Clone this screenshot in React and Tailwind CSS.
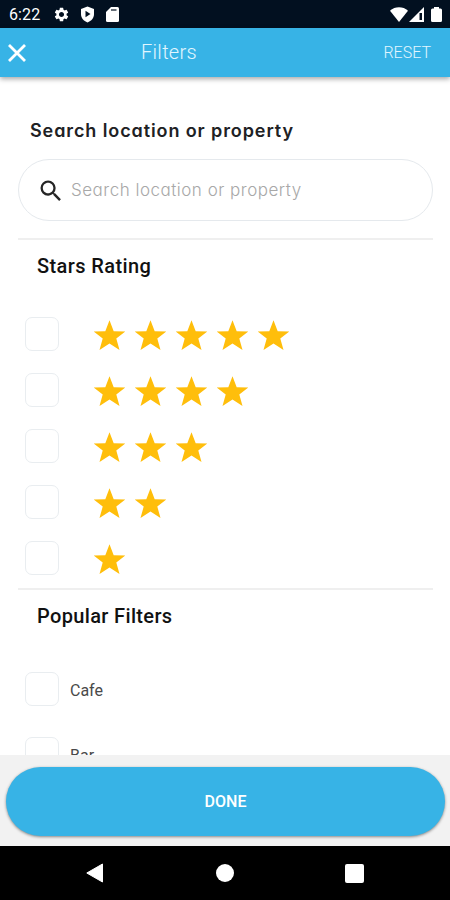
import React, { useState } from 'react';
import { MdSearch, MdSettings } from 'react-icons/md';

const STAR_RATINGS = [5, 4, 3, 2, 1];

const POPULAR_FILTERS = ['Cafe', 'Bar'];

const Star = () => (
  <svg width="33" height="31" viewBox="0 0 33 31" fill="#ffbe0b">
    <path d="M16.5 .3 20.7 11.3 32.300 11.600 23.300 18.600 26.500 30 16.500 23.500 6.500 30 9.700 18.600 .7 11.600 12.300 11.300Z" />
  </svg>
);

const Checkbox = ({ checked, onChange, label }) => (
  <button
    role="checkbox"
    aria-checked={checked}
    aria-label={label}
    onClick={onChange}
    className={`size-[34px] rounded-[7px] border shrink-0 ${checked ? 'bg-[#37b3e6] border-[#37b3e6]' : 'bg-white border-[#e9edf0]'}`}
  />
);

const StatusBar = () => (
  <div className="h-7 shrink-0 bg-[#021020] text-white flex items-center pl-[9px] pr-2 pt-[1px]">
    <span className="w-[33px] text-[16px] leading-none tracking-[0.1px]">6:22</span>
    <MdSettings className="ml-[11px] size-[17px]" />
    <svg className="ml-[10px]" width="15" height="17" viewBox="0 0 15 17">
      <path fill="#fff" d="M7.5.5 14 3v5c0 4-2.6 7-6.5 8.5C3.600 15 1 12 1 8V3Z" />
      <path fill="#021020" d="M5.500 4.800 10.500 8 5.500 11.200Z" />
    </svg>
    <svg className="ml-[11px]" width="13" height="15" viewBox="0 0 13 15">
      <path fill="#fff" d="M5 0h6.500A1.500 1.500 0 0 1 13 1.500v12A1.500 1.500 0 0 1 11.500 15h-10A1.500 1.500 0 0 1 0 13.500V5Z" />
      <path fill="#021020" fillOpacity="0.75" d="M5 2.200h5.500v1.600H5Z" />
    </svg>
    <div className="flex-1" />
    <svg width="18" height="15" viewBox="0 0 18 15">
      <path fill="#fff" d="M9 15 0 3.700C5-.9 13-.9 18 3.700Z" />
    </svg>
    <svg className="ml-[1px]" width="15" height="15" viewBox="0 0 15 15">
      <path fill="#fff" d="M15 0v15H0Z" />
      <path fill="#021020" d="M10.500 6H13v7h-2.500Z" />
    </svg>
    <svg className="ml-[7px]" width="11" height="15" viewBox="0 0 11 15">
      <path fill="#fff" d="M3 0h5v1.500h1.500A1.500 1.500 0 0 1 11 3v10.500A1.500 1.500 0 0 1 9.500 15h-8A1.500 1.500 0 0 1 0 13.500V3a1.500 1.500 0 0 1 1.500-1.500H3Z" />
    </svg>
  </div>
);

const NavigationBar = () => (
  <div className="h-[54px] shrink-0 bg-black flex items-center justify-between pl-[86px] pr-[86px]">
    <svg width="17" height="20" viewBox="0 0 17 20">
      <path fill="#fff" stroke="#fff" strokeLinejoin="round" d="M16.500 1v18L.8 10Z" />
    </svg>
    <div className="ml-[2px] size-[18px] rounded-full bg-white" />
    <div className="size-[19px] rounded-[2px] bg-white" />
  </div>
);

const App = () => {
  const [query, setQuery] = useState('');
  const [selected, setSelected] = useState([]);

  const toggle = (key) => {
    setSelected((prev) => (prev.includes(key) ? prev.filter((k) => k !== key) : [...prev, key]));
  };

  const handleReset = () => {
    setQuery('');
    setSelected([]);
  };

  return (
    <div className="w-[450px] h-[900px] flex flex-col overflow-hidden bg-white font-[Roboto,sans-serif]">
      <StatusBar />

      {/* App bar */}
      <header className="relative h-[49px] shrink-0 bg-[#37b3e6] flex items-center pl-[5px] pr-[19px] text-white shadow-[0_2px_5px_rgba(0,0,0,0.35)]">
        <button aria-label="Close">
          <svg className="size-6" viewBox="0 0 24 24" fill="none" stroke="currentColor" strokeWidth="2.800">
            <path d="M4 4 20 20M20 4 4 20" />
          </svg>
        </button>
        <h1 className="ml-[112px] pb-[2px] flex-1 text-[20px] leading-6 font-light tracking-[0.3px] text-[#e2f6ff]">Filters</h1>
        <button onClick={handleReset} className="text-[16px] leading-6 font-light text-[#e2f6ff]">RESET</button>
      </header>

      <main className="flex-1 min-h-0 overflow-hidden px-[18px]">
        {/* Search */}
        <section className="pt-[42px] h-[161px]">
          <h2 className="pl-3 text-[18px] leading-6 font-semibold tracking-[0.9px] whitespace-nowrap text-[#202124] font-[Inter,sans-serif] [font-feature-settings:'cv11']">
            Search location or property
          </h2>
          <label className="mt-[16px] h-[62px] w-[415px] rounded-full border border-[#e5e9ed] flex items-center pl-[18px]">
            <MdSearch className="size-7 mt-px text-[#252525]" />
            <input
              value={query}
              onChange={(e) => setQuery(e.target.value)}
              placeholder="Search location or property"
              className="ml-[6px] pt-[2px] w-[300px] text-[17px] font-light tracking-[0.5px] outline-none text-[#252525] placeholder:text-[#a8a8a8] font-[Inter,sans-serif] [font-feature-settings:'cv11']"
            />
          </label>
        </section>

        {/* Stars */}
        <section className="border-t-2 border-[#efefef] w-[415px] h-[350px]">
          <h2 className="pt-[14px] pl-[19px] text-[20px] leading-6 font-medium tracking-[0.4px] text-[#111]">Stars Rating</h2>
          <div className="mt-[39px] pl-[7px] flex flex-col gap-[22px]">
            {STAR_RATINGS.map((count) => (
              <div key={count} className="flex items-center h-[34px]">
                <Checkbox
                  label={`${count} stars`}
                  checked={selected.includes(count)}
                  onChange={() => toggle(count)}
                />
                <div className="ml-[34px] flex gap-2 pt-[3px]">
                  {Array.from({ length: count }, (_, i) => (
                    <Star key={i} />
                  ))}
                </div>
              </div>
            ))}
          </div>
        </section>

        {/* Popular */}
        <section className="border-t-2 border-[#efefef] w-[415px]">
          <h2 className="pt-[14px] pl-[19px] text-[20px] leading-6 font-medium tracking-[0.35px] text-[#111]">Popular Filters</h2>
          <div className="mt-[44px] pl-[7px] flex flex-col gap-[31px]">
            {POPULAR_FILTERS.map((name) => (
              <div key={name} className="flex items-center h-[34px]">
                <Checkbox label={name} checked={selected.includes(name)} onChange={() => toggle(name)} />
                <span className="ml-[11px] pt-[4px] text-[16px] leading-5 text-[#4a4a4a]">{name}</span>
              </div>
            ))}
          </div>
        </section>
      </main>

      <footer className="h-[91px] shrink-0 bg-[#f2f2f2] pt-[12px] pl-[6px] pr-[5px]">
        <button className="w-full h-[69px] rounded-full bg-[#37b3e6] text-white text-[16px] font-medium shadow-[0_1px_3px_rgba(0,0,0,0.45)]">
          DONE
        </button>
      </footer>

      <NavigationBar />
    </div>
  );
};

export default App;
